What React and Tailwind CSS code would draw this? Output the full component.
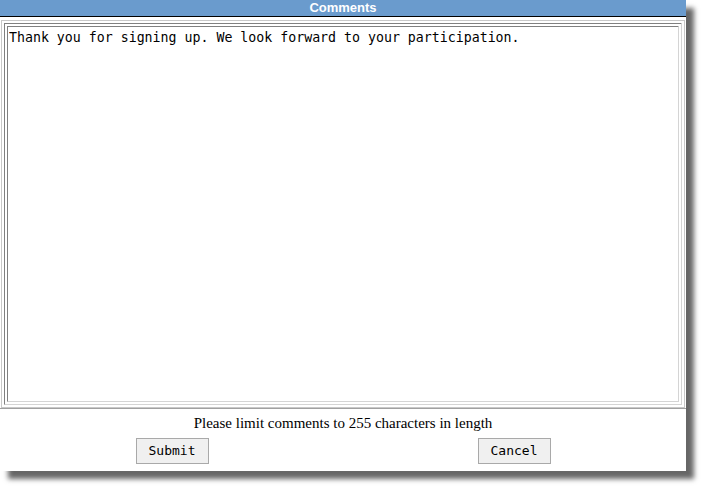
export default function App() {
  return (
    <div className="w-[701px] h-[486px] bg-white pt-0">
      <div className="w-[686px] h-[471px] bg-white flex flex-col shadow-[8px_8px_5px_rgba(0,0,0,0.6)]">
        <div className="h-[16px] bg-[#6a9bcd] border-b border-black box-content text-white font-bold text-[13px] leading-[16px] text-center font-['Liberation_Sans',Arial,sans-serif]">
          Comments
        </div>
        <div className="mt-[3px] mx-[1px] h-[388px] border border-[#c8c8c8] p-[2px] flex">
          <div className="flex-1 border-[4px] border-double border-t-[#808080] border-l-[#808080] border-r-[#d4d4d4] border-b-[#d4d4d4] bg-white pt-[3px] px-[1px]">
            <textarea
              className="w-full h-full resize-none outline-none text-black text-[13.25px] leading-[16px] font-['DejaVu_Sans_Mono',monospace]"
              defaultValue="Thank you for signing up. We look forward to your participation."
            />
          </div>
        </div>
        <div className="border-t border-[#a0a0a0] flex flex-col items-center">
          <p className="mt-[5px] text-[15px] leading-[18px] text-black font-['Liberation_Serif','Times_New_Roman',serif]">
            Please limit comments to 255 characters in length
          </p>
          <div className="mt-[6px] w-[415px] flex justify-between">
            <button className="w-[73px] h-[26px] bg-[#f0f0f0] border border-[#a9a9a9] text-[13px] text-black font-['DejaVu_Sans_Mono',monospace]">
              Submit
            </button>
            <button className="w-[73px] h-[26px] bg-[#f0f0f0] border border-[#a9a9a9] text-[13px] text-black font-['DejaVu_Sans_Mono',monospace]">
              Cancel
            </button>
          </div>
        </div>
      </div>
    </div>
  )
}
